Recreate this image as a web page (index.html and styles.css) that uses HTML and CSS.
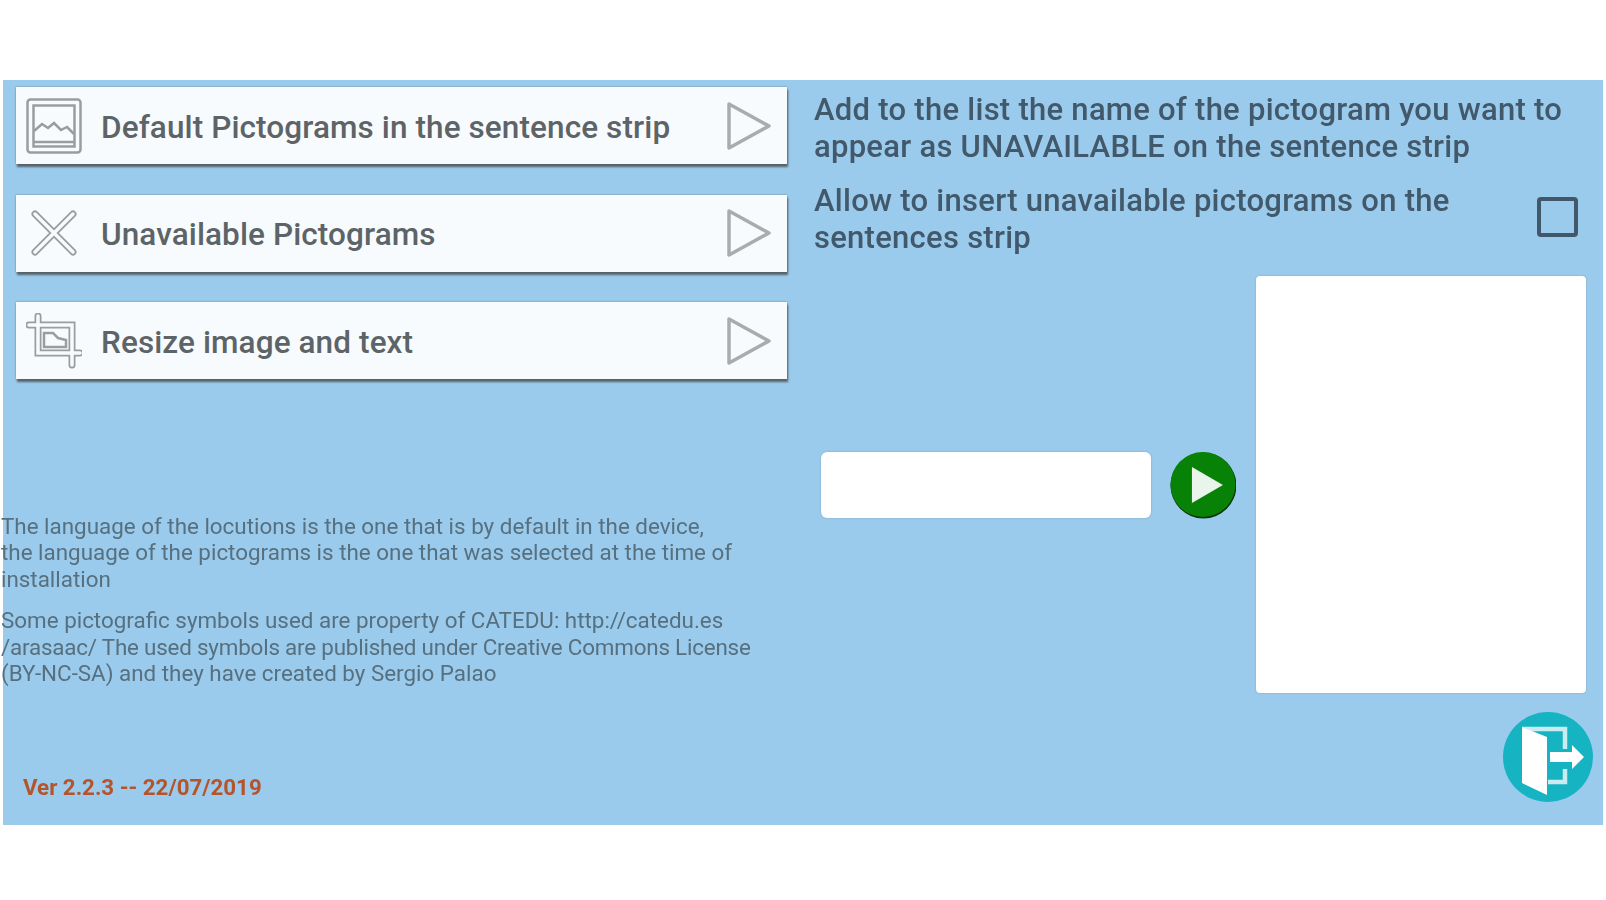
FILE: index.html
```html
<!DOCTYPE html>
<html lang="en">
<head>
    <meta charset="UTF-8">
    <meta name="viewport" content="width=device-width, initial-scale=1.0">
    <title>Settings</title>
    <link rel="stylesheet" href="styles.css">
</head>
<body>
    <div class="panel">
        <div class="left">
            <div class="menu-button">
                <svg class="menu-icon" viewBox="0 0 56 56">
                    <rect class="thin" x="1.5" y="1.5" width="53" height="53" rx="3"/>
                    <rect class="thin" x="7.5" y="7.5" width="41" height="41"/>
                    <path class="thin" d="M8 33 L16 26 L22 30 L28 25 L35 32 L41 29 L48 36 M8 44 H48"/>
                </svg>
                <span class="menu-label">Default Pictograms in the sentence strip</span>
                <svg class="menu-arrow" viewBox="0 0 44 48"><path d="M2 2 L42 24 L2 46 Z"/></svg>
            </div>
            <div class="menu-button">
                <svg class="menu-icon" viewBox="0 0 56 56">
                    <path class="outer" d="M9 9 L47 47 M47 9 L9 47"/>
                    <path class="inner" d="M9 9 L47 47 M47 9 L9 47"/>
                </svg>
                <span class="menu-label">Unavailable Pictograms</span>
                <svg class="menu-arrow" viewBox="0 0 44 48"><path d="M2 2 L42 24 L2 46 Z"/></svg>
            </div>
            <div class="menu-button">
                <svg class="menu-icon" viewBox="0 0 56 56">
                    <path class="outer" d="M12 3 V40 H54 M3 12 H46 V52"/>
                    <path class="inner" d="M12 3 V40 H54 M3 12 H46 V52"/>
                    <path class="thin" d="M18 34 V20 H27 L32 25 L40 27 V34 Z"/>
                </svg>
                <span class="menu-label">Resize image and text</span>
                <svg class="menu-arrow" viewBox="0 0 44 48"><path d="M2 2 L42 24 L2 46 Z"/></svg>
            </div>

            <div class="notes">
                <p>The language of the locutions is the one that is by default in the device,<br>the language of the pictograms is the one that was selected at the time of<br>installation</p>
                <p>Some pictografic symbols used are property of CATEDU: http://catedu.es<br><span class="tight">/arasaac/ The used symbols are published under Creative Commons License</span><br>(BY-NC-SA) and they have created by Sergio Palao</p>
            </div>
            <div class="version">Ver 2.2.3 -- 22/07/2019</div>
        </div>

        <div class="right">
            <p class="heading">Add to the list the name of the pictogram you want to appear as UNAVAILABLE on the sentence strip</p>
            <div class="allow-row">
                <p class="heading allow-text">Allow to insert unavailable pictograms on the sentences strip</p>
                <div class="checkbox"></div>
            </div>
            <div class="editor">
                <div class="text-input"></div>
                <svg class="add-button" viewBox="0 0 68 68">
                    <circle cx="34.5" cy="34.5" r="33" fill="#0b2f0b"/>
                    <circle cx="34" cy="33.5" r="32.5" fill="#078207"/>
                    <path d="M23 16 L54 34 L23 52 Z" fill="#e9f4ea"/>
                </svg>
                <div class="word-list"></div>
            </div>
            <div class="footer">
                <svg class="exit-button" viewBox="0 0 90 90">
                    <circle cx="45" cy="45" r="45" fill="#16b4c3"/>
                    <path d="M19 17 H62 V37 M62 57 V70 H45" fill="none" stroke="#c9ecf0" stroke-width="4.5"/>
                    <path d="M19 15 L44 25 V83 L19 71 Z" fill="#fff"/>
                    <path d="M47 40 H69 V33 L81 45 L69 57 V50 H47 Z" fill="#fff"/>
                </svg>
            </div>
        </div>
    </div>
</body>
</html>
```

FILE: styles.css
```css
body {
    margin: 0;
    background: white;
    font-family: Roboto, sans-serif;
}
p {
    margin: 0;
}
.panel {
    display: flex;
    box-sizing: border-box;
    width: 1600px;
    height: 745px;
    margin: 80px 0 0 3px;
    background: #9bcbec;
    filter: blur(0.7px);
}
.left {
    display: flex;
    flex-direction: column;
    width: 811px;
}
.menu-button {
    display: flex;
    align-items: center;
    box-sizing: border-box;
    width: 771px;
    height: 77px;
    margin: 7px 0 0 13px;
    padding: 0 16px 0 10px;
    background: #f8fbfd;
    box-shadow: 1px 3px 2px #56626a, 0 0 2px #6f8797;
}
.menu-button + .menu-button {
    margin-top: 30.5px;
}
.menu-icon {
    width: 56px;
    height: 56px;
    fill: none;
}
.menu-icon .thin {
    stroke: #9a9d9f;
    stroke-width: 2.5;
}
.menu-icon .outer {
    stroke: #9a9d9f;
    stroke-width: 7;
    stroke-linecap: round;
}
.menu-icon .inner {
    stroke: #f8fbfd;
    stroke-width: 3.5;
    stroke-linecap: round;
}
.menu-label {
    flex: 1;
    margin-left: 19px;
    padding-top: 3px;
    font-size: 31.5px;
    font-weight: 500;
    letter-spacing: 0.1px;
    color: #5d6468;
}
.menu-arrow {
    width: 44px;
    height: 48px;
    fill: none;
    stroke: #a9acae;
    stroke-width: 3.5;
    stroke-linejoin: round;
}
.notes {
    margin: 133.5px 0 0 -2px;
    font-size: 22.4px;
    line-height: 26.5px;
    color: #56707f;
    white-space: nowrap;
}
.notes p + p {
    margin-top: 15px;
}
.tight {
    letter-spacing: -0.2px;
}
.version {
    margin: auto 0 25px 20px;
    font-size: 22.3px;
    font-weight: 700;
    color: #b5532b;
}
.right {
    display: flex;
    flex-direction: column;
    flex: 1;
    min-width: 0;
    padding: 12px 17px 0 0;
}
.heading {
    font-size: 31px;
    font-weight: 500;
    letter-spacing: 0.27px;
    line-height: 36.5px;
    color: #42596b;
}
.allow-row {
    display: flex;
    align-items: center;
    margin-top: 18px;
}
.allow-text {
    flex: 1;
}
.checkbox {
    box-sizing: border-box;
    width: 41px;
    height: 40px;
    margin: 0 8px 6px 0;
    border: 4px solid #41586a;
    border-radius: 4px;
}
.editor {
    display: flex;
    align-items: center;
    margin-top: 20px;
    padding-left: 7px;
}
.text-input {
    width: 330px;
    height: 66px;
    background: white;
    border-radius: 6px;
    box-shadow: 0 0 2px #7e9fb8;
}
.add-button {
    width: 68px;
    height: 68px;
    margin-left: 18px;
}
.word-list {
    width: 330px;
    height: 417px;
    margin-left: 20px;
    background: white;
    border-radius: 4px;
    box-shadow: 0 0 2px #7e9fb8;
}
.footer {
    display: flex;
    justify-content: flex-end;
    margin: 19px -7px 0 0;
}
.exit-button {
    width: 90px;
    height: 90px;
}
```
